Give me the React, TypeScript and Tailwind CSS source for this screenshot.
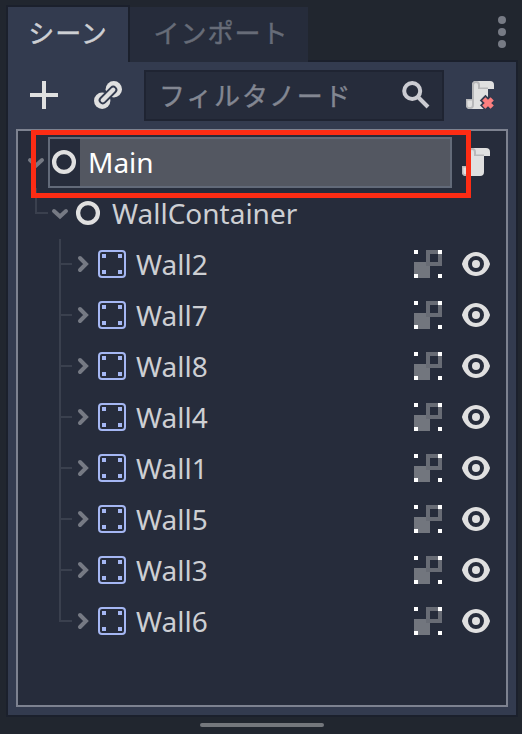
const WALLS = ["Wall2", "Wall7", "Wall8", "Wall4", "Wall1", "Wall5", "Wall3", "Wall6"];

function NodeIcon() {
  return (
    <svg width="32" height="32" viewBox="0 0 16 16" className="shrink-0">
      <circle cx="8" cy="8" r="4.95" fill="none" stroke="#e0e0e0" strokeWidth="2.15" />
    </svg>
  );
}

function StaticBodyIcon() {
  return (
    <svg width="28" height="28" viewBox="0 0 28 28" className="shrink-0">
      <rect x="1" y="1" width="26" height="26" rx="3" fill="none" stroke="#a5b7f3" strokeWidth="2" />
      <path d="M4 4h4v4H4zM20 4h4v4h-4zM4 20h4v4H4zM20 20h4v4h-4z" fill="#a5b7f3" />
    </svg>
  );
}

function GroupIcon() {
  return (
    <svg width="28" height="28" viewBox="0 0 28 28" className="shrink-0">
      <path d="M0 12h16v16H0z" fill="#72767e" />
      <path d="M14 2h12v12H14z" fill="none" stroke="#686c75" strokeWidth="4" />
      <path d="M0 0h4v4H0zM24 0h4v4h-4zM0 24h4v4H0zM24 24h4v4h-4z" fill="#fff" />
    </svg>
  );
}

function EyeIcon() {
  return (
    <svg width="32" height="32" viewBox="0 0 16 16" className="shrink-0">
      <path
        fillRule="evenodd"
        fill="#e0e0e0"
        d="M8 2C5.443 2 2.124 3.73 1.045 7.705a1 1 0 0 0 0 .582C2.164 12.23 5.22 14 8 14s5.836-1.77 6.959-5.713a1 1 0 0 0 0-.574C13.872 3.794 10.558 2 8 2zm0 2a4 4 0 0 1 0 8 4 4 0 0 1 0-8zm0 2a2 2 0 0 0 0 4 2 2 0 0 0 0-4z"
      />
    </svg>
  );
}

function ScriptIcon({ remove = false }: { remove?: boolean }) {
  return (
    <svg width="32" height="32" viewBox="0 0 16 16" className="shrink-0">
      <path d="M6 1a2 2 0 0 0-2 2v7H1v3a2 2 0 0 0 2 2h7a2 2 0 0 0 2-2V5h3V3a2 2 0 0 0-2-2z" fill="#e0e0e0" />
      <path
        d="M6 1a2 2 0 0 0-2 2v7H1v3a2 2 0 0 0 4 0V3a1 1 0 0 1 2 0v2h5V4.3H8V3A2 2 0 0 0 6 1zM1.7 10.7H4V13a1.1 1.1 0 0 1-2.3 0z"
        fill="#b8b8ba"
        fillRule="evenodd"
      />
      {remove && (
        <>
          <path d="M9.3 9.3l4 4M14 10l-4.6 4.6" stroke="#333b4f" strokeWidth="4" />
          <path d="M9.9 9.9l4.2 4.2m0-4.2l-4.2 4.2" stroke="#fc7f7f" strokeWidth="2.3" />
        </>
      )}
    </svg>
  );
}

function LinkIcon() {
  return (
    <svg width="32" height="32" viewBox="0 0 32 32" className="shrink-0">
      <circle cx="10.2" cy="21.8" r="8.2" fill="#e0e0e0" />
      <circle cx="21.8" cy="10.2" r="8.2" fill="#e0e0e0" />
      <g fill="none" strokeLinecap="round">
        <path d="M10.8 21.2L21.2 10.8" stroke="#333b4f" strokeWidth="8.2" />
        <path d="M10.8 21.2L21.2 10.8" stroke="#e0e0e0" strokeWidth="4.4" />
      </g>
    </svg>
  );
}

function WallRow({ name, last }: { name: string; last: boolean }) {
  return (
    <div className="flex h-[51px] items-center">
      <svg width="80" height="51" viewBox="0 0 80 51" className="shrink-0">
        <path d={last ? "M42 0v25h12" : "M42 0v51M42 25h12"} fill="none" stroke="#3a404e" strokeWidth="2" />
        <path d="M62 19l6 6-6 6" fill="none" stroke="#767a84" strokeWidth="4" strokeLinecap="round" />
      </svg>
      <div className="-mt-px flex h-7 w-7">
        <StaticBodyIcon />
      </div>
      <span className="ml-[10px] flex-1 pb-[2px]">{name}</span>
      <div className="-mt-px mr-[14px] flex items-center gap-[18px]">
        <GroupIcon />
        <EyeIcon />
      </div>
    </div>
  );
}

export default function App() {
  return (
    <div className="relative flex h-[734px] w-[522px] flex-col overflow-hidden bg-[#21262f] font-['Noto_Sans','Noto_Sans_CJK_JP',sans-serif] text-[28px] leading-[38px] text-[#cdcfd3]">
      <div className="ml-[6px] flex h-[62px] pt-[5px] text-[26px] tracking-[1px]">
        <div className="flex w-[124px] items-center justify-center border-x-2 border-t-2 border-[#1b202c] bg-[#333b4f] pb-[4px] [-webkit-text-stroke:0.4px_currentColor]">
          シーン
        </div>
        <div className="mt-[2px] flex w-[178px] items-center justify-center bg-[#262c3b] pb-[4px] pl-[4px] text-[#676c78] [-webkit-text-stroke:0.4px_currentColor]">
          インポート
        </div>
        <div className="flex w-[210px] justify-end border-b-2 border-[#1b202c] pr-2">
          <svg width="16" height="55" viewBox="0 0 16 55" fill="#777b85">
            <circle cx="8" cy="15" r="4" />
            <circle cx="8" cy="27" r="4" />
            <circle cx="8" cy="39" r="4" />
          </svg>
        </div>
      </div>

      <div className="ml-[6px] flex h-[655px] w-[512px] flex-col border-x-2 border-b-2 border-[#1b202c] bg-[#333b4f] px-2 pb-2">
        <div className="flex h-[67px] items-center pb-[1px]">
          <svg width="32" height="32" viewBox="0 0 32 32" className="ml-3">
            <path d="M16 2v28M2 16h28" stroke="#e0e0e0" strokeWidth="4" />
          </svg>
          <div className="ml-8 flex">
            <LinkIcon />
          </div>
          <div className="ml-5 flex h-[51px] w-[300px] items-center justify-between border-2 border-[#1f2432] bg-[#262c3b] pl-[13px] pr-[10px] text-[#838792]">
            <span className="pt-px text-[26px] tracking-[1.8px] [-webkit-text-stroke:0.4px_currentColor]">
              フィルタノード
            </span>
            <svg width="32" height="32" viewBox="0 0 32 32" fill="none" stroke="#cbccd2" strokeWidth="4">
              <circle cx="12.2" cy="12" r="8" />
              <path d="M18 18l10 10" />
            </svg>
          </div>
          <div className="ml-5 flex">
            <ScriptIcon remove />
          </div>
        </div>

        <div className="flex h-[578px] flex-col border-2 border-[#7d8290] bg-[#262c3b] pt-[6px]">
          <div className="flex h-[51px] items-center">
            <svg width="30" height="51" viewBox="0 0 30 51" className="shrink-0">
              <path d="M12 23l6 5.5 6-5.5" fill="none" stroke="#767a84" strokeWidth="4" strokeLinecap="round" />
            </svg>
            <div className="flex h-[51px] w-[404px] items-stretch border-2 border-[#626a79]">
              <div className="-ml-[2px] flex w-8 items-center pb-px">
                <NodeIcon />
              </div>
              <div className="flex flex-1 items-center bg-[#535761] pb-[2px] pl-2 text-white">Main</div>
            </div>
            <div className="-mt-px ml-2 flex">
              <ScriptIcon />
            </div>
          </div>
          <div className="flex h-[51px] items-center">
            <svg width="54" height="51" viewBox="0 0 54 51" className="shrink-0">
              <path d="M18 0v25h12" fill="none" stroke="#3a404e" strokeWidth="2" />
              <path d="M36 23l6 5.5 6-5.5" fill="none" stroke="#767a84" strokeWidth="4" strokeLinecap="round" />
            </svg>
            <div className="-mt-px flex">
              <NodeIcon />
            </div>
            <span className="ml-2 pb-[2px]">WallContainer</span>
          </div>
          {WALLS.map((name, i) => (
            <WallRow key={name} name={name} last={i === WALLS.length - 1} />
          ))}
        </div>
      </div>

      <div className="ml-[200px] mt-[6px] h-1 w-[124px] rounded-full bg-[#74777c]" />
      <div className="absolute left-[31px] top-[130px] h-[68px] w-[440px] border-[5px] border-[#fc2c14]" />
    </div>
  );
}
